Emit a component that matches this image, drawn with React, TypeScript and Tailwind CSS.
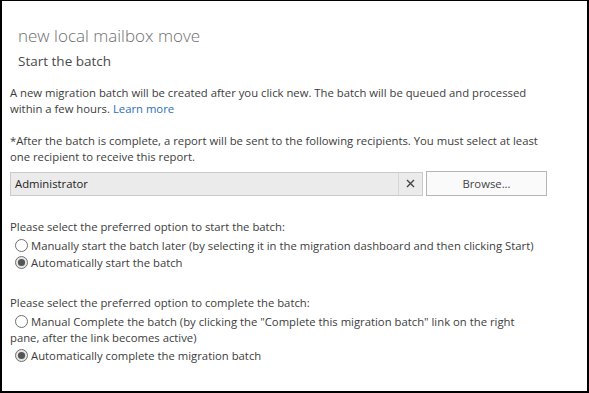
import React from 'react';

function Radio({ checked }: { checked?: boolean }) {
  return (
    <span className="inline-block align-[-2px] ml-[5px] mr-[3px] w-[13px] h-[13px]">
      <svg className="block" width="13" height="13" viewBox="0 0 13 13">
        <circle cx="6.5" cy="6.5" r="6" fill={checked ? '#e6e6e6' : '#fff'} stroke="#6f6f6f" strokeWidth="1" />
        {checked && <circle cx="6.5" cy="6.5" r="3.6" fill="#555" />}
      </svg>
    </span>
  );
}

export default function App() {
  return (
    <div
      className="w-[589px] h-[393px] bg-white border-l-2 border-t border-r-2 border-b-2 border-black text-[#3c3c3c] text-[11.3px] leading-[16px] overflow-hidden"
      style={{ fontFamily: '"Open Sans", "Noto Sans", sans-serif' }}
    >
      {/* Header */}
      <div className="pl-[16px] pt-[24px]">
        <div className="text-[17px] leading-[22px] font-light text-[#6e6e6e]">new local mailbox move</div>
        <div className="text-[13.5px] leading-[20px] mt-[4px] text-[#4a4a4a]">Start the batch</div>
      </div>

      <div className="pl-[8px] pr-[37px]">
        <p className="mt-[14px]">
          A new migration batch will be created after you click new. The batch will be queued and processed within a few hours.{' '}
          <span className="text-[#2a70b8]">Learn more</span>
        </p>

        <p className="mt-[16px]">
          *After the batch is complete, a report will be sent to the following recipients. You must select at least one recipient to receive this report.
        </p>

        <div className="flex items-center mt-[6px] gap-[3px]">
          <div className="flex w-[413px] h-[24px] border border-[#cacaca] bg-[#ebebeb]">
            <div className="flex-1 flex items-center pl-[4px] text-[#222]">Administrator</div>
            <div className="w-[24px] flex items-center justify-center border-l border-[#d6d6d6]">
              <svg width="9" height="9" viewBox="0 0 9 9">
                <path d="M1 1 L8 8 M8 1 L1 8" stroke="#444" strokeWidth="1.4" />
              </svg>
            </div>
          </div>
          <button className="w-[121px] h-[25px] border border-[#b5b5b5] bg-[#fafafa] text-[#444]">Browse...</button>
        </div>

        <div className="mt-[23px]">
          <div>Please select the preferred option to start the batch:</div>
          <div className="mt-[3px]">
            <Radio />Manually start the batch later (by selecting it in the migration dashboard and then clicking Start)
          </div>
          <div className="mt-[1px]">
            <Radio checked />Automatically start the batch
          </div>
        </div>

        <div className="mt-[24px]">
          <div>Please select the preferred option to complete the batch:</div>
          <div className="mt-[3px] pr-[14px]">
            <Radio />Manual Complete the batch (by clicking the "Complete this migration batch" link on the right pane, after the link becomes active)
          </div>
          <div className="mt-[2px]">
            <Radio checked />Automatically complete the migration batch
          </div>
        </div>
      </div>
    </div>
  );
}
